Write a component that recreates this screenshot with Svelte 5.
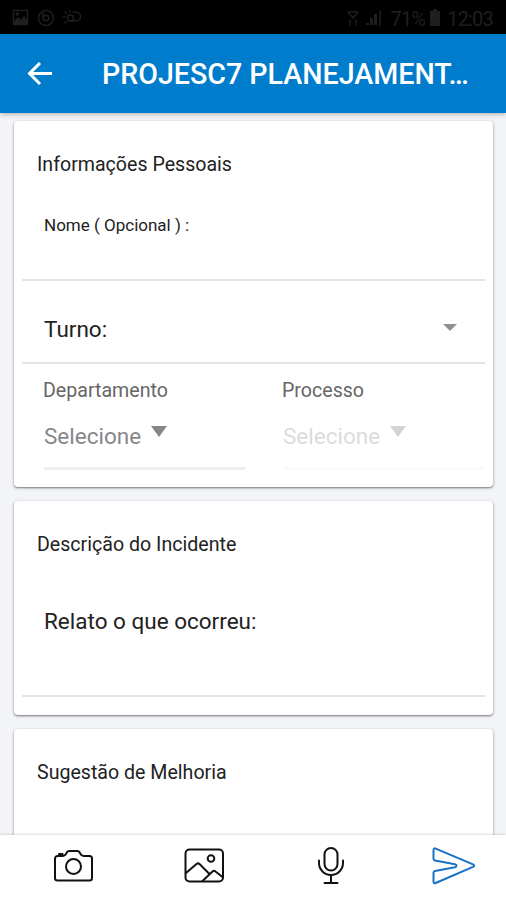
<script lang="ts">
  interface SelectField {
    label: string;
    value: string;
    disabled: boolean;
  }

  const title = 'PROJESC7 PLANEJAMENT…';

  const selects: SelectField[] = [
    { label: 'Departamento', value: 'Selecione', disabled: false },
    { label: 'Processo', value: 'Selecione', disabled: true }
  ];
</script>

<div class="screen">
  <div class="status-bar">
    <svg class="notifications" width="72" height="20" viewBox="0 0 72 20">
      <rect x="1.5" y="2.5" width="14" height="14" />
      <path d="M2 15l4-5 3 3 3-4 3 4v3H2z" fill="currentColor" />
      <circle cx="5.5" cy="6" r="1" />
      <circle cx="34" cy="10" r="7.5" />
      <circle cx="34" cy="10" r="2.8" />
      <path d="M31 5v5M51 9h2M53 4l1.5 1.5M53 15l1.5-1.5M58 3v1" />
      <circle cx="58.5" cy="10" r="3" />
      <path d="M61 4h3a4.5 4.5 0 0 1 0 9h-6" />
    </svg>
    <div class="status-right">
      <svg width="36" height="20" viewBox="0 0 36 20">
        <path d="M1 4h10L6 10zM3 17v-5M9 17v-5" />
        <path d="M19 17h3v-2h-3zM23 17h3v-7h-3zM27 17h3V6h-3z" fill="currentColor" stroke="none" />
        <path d="M33 17V3" />
      </svg>
      <span class="battery">71%</span>
      <svg width="13" height="20" viewBox="0 0 13 20">
        <path d="M1 3h3V1h4v2h3v15H1z" fill="currentColor" stroke="none" />
      </svg>
      <span class="clock">12:03</span>
    </div>
  </div>

  <header>
    <svg class="back" width="26" height="24" viewBox="0 0 26 24">
      <path d="M25 11.5H3M13 1L2.5 11.5 13 22" />
    </svg>
    <h1>{title}</h1>
  </header>

  <main>
    <section class="card personal">
      <h2>Informações Pessoais</h2>
      <div class="field name">
        <span>Nome ( Opcional ) :</span>
      </div>
      <div class="field shift">
        <span>Turno:</span>
        <i class="caret small"></i>
      </div>
      <div class="selects">
        {#each selects as select}
          <div class="select" class:disabled={select.disabled}>
            <span class="label">{select.label}</span>
            <div class="value">
              <span>{select.value}</span>
              <i class="caret"></i>
            </div>
          </div>
        {/each}
      </div>
    </section>

    <section class="card incident">
      <h2>Descrição do Incidente</h2>
      <div class="field report">
        <span>Relato o que ocorreu:</span>
      </div>
    </section>

    <section class="card suggestion">
      <h2>Sugestão de Melhoria</h2>
    </section>
  </main>

  <footer>
    <svg width="42" height="40" viewBox="0 0 42 40">
      <path d="M4.5 10H10c1.5 0 2.5-1 3.2-2.5.7-1.6 1.3-2.5 2.8-2.5h8.500c1.5 0 2.100.9 2.800 2.500.7 1.500 1.700 2.500 3.200 2.500h6a2.500 2.500 0 0 1 2.500 2.500v19.500a2.500 2.500 0 0 1-2.500 2.500h-32A2.500 2.500 0 0 1 2 32V12.500a2.500 2.500 0 0 1 2.500-2.500z" />
      <circle cx="20.5" cy="20.5" r="7.5" />
      <path d="M6 9.500V8h3.500v1.500z" fill="currentColor" />
    </svg>
    <svg width="42" height="40" viewBox="0 0 42 40">
      <rect x="2.5" y="3.5" width="37.5" height="32" rx="4" />
      <circle cx="28" cy="12.5" r="3.3" />
      <path d="M3 27l10.500-9c1-.8 2-.8 3 0L26 27.500M19.500 35l10-9.500c1-.9 2-.9 3 0l7 5.500" />
    </svg>
    <svg width="42" height="40" viewBox="0 0 42 40">
      <rect x="14.5" y="2" width="13" height="22.5" rx="6.5" />
      <path d="M9 14.500V17a12 12 0 0 0 24 0v-2.500M21 29v7.500M14.500 37h13" />
    </svg>
    <svg class="send" width="46" height="40" viewBox="0 0 46 40">
      <path d="M2.500 4.200c0-1.800 1-2.200 2.200-1.600L42 18.400c1.600.8 1.600 1.700 0 2.500L4.700 37c-1.200.6-2.200.1-2.200-1.600v-8.600c0-1 .5-1.500 1.500-1.700l20-3.900c2-.5 2-2.400 0-2.900l-20-3.900c-1-.2-1.500-.7-1.500-1.700z" />
    </svg>
  </footer>
</div>

<style>
  :global(body) {
    background: #f2f4f7;
  }

  .screen {
    display: flex;
    flex-direction: column;
    height: 900px;
    overflow: hidden;
    font-family: Roboto, 'Liberation Sans', sans-serif;
    color: #222;
  }

  svg {
    flex-shrink: 0;
    fill: none;
    stroke: currentColor;
    stroke-width: 2;
    stroke-linecap: round;
    stroke-linejoin: round;
  }

  .status-bar {
    display: flex;
    justify-content: space-between;
    flex: 0 0 34px;
    box-sizing: border-box;
    padding: 8px 13px 0 12px;
    background: #000;
    color: #1f1f1f;
    font-size: 20px;
    line-height: 22px;
  }

  .status-bar svg {
    stroke-width: 1.5;
  }

  .status-right {
    display: flex;
  }

  .battery {
    margin: 0 4px 0 7px;
    letter-spacing: -0.8px;
  }

  .clock {
    margin-left: 5px;
    letter-spacing: -0.8px;
  }

  header {
    display: flex;
    align-items: center;
    flex: 0 0 79px;
    box-sizing: border-box;
    padding: 0 27px;
    background: #007ccd;
    color: #fff;
    box-shadow: 0 1px 5px rgba(0, 0, 0, 0.3);
    z-index: 1;
  }

  .back {
    stroke-width: 3;
    stroke-linecap: butt;
    stroke-linejoin: miter;
  }

  h1 {
    margin: 0 0 0 49px;
    font-size: 28.6px;
    font-weight: 500;
    line-height: 40px;
    white-space: nowrap;
  }

  main {
    display: flex;
    flex-direction: column;
    gap: 14px;
    flex: 1;
    min-height: 0;
    padding: 8px 13px 0 14px;
    overflow: hidden;
    background: #f2f4f7;
  }

  .card {
    flex-shrink: 0;
    box-sizing: border-box;
    padding: 0 8px;
    background: #fff;
    border-radius: 4px;
    box-shadow: 0 1px 2px rgba(0, 0, 0, 0.45), 0 1px 4px rgba(0, 0, 0, 0.12);
  }

  .personal {
    height: 366px;
  }

  .incident {
    height: 214px;
  }

  .suggestion {
    height: 214px;
  }

  h2 {
    margin: 0;
    padding: 32px 15px 0;
    font-size: 19.6px;
    font-weight: 400;
    line-height: 24px;
  }

  .field {
    box-sizing: border-box;
    padding: 0 22px;
    border-bottom: 2px solid #e4e4e4;
    font-size: 22.5px;
    line-height: 26px;
  }

  .name {
    height: 104px;
    padding-top: 35px;
    font-size: 17px;
  }

  .shift {
    display: flex;
    justify-content: space-between;
    height: 83px;
    padding: 35px 28px 0 22px;
  }

  .report {
    height: 140px;
    padding-top: 51px;
  }

  .caret {
    width: 0;
    height: 0;
    border: 8.5px solid transparent;
    border-top: 11px solid #85878a;
    border-bottom: 0;
  }

  .caret.small {
    margin-top: 8px;
    border-width: 7px 7px 0;
    border-top-color: #909090;
  }

  .selects {
    display: grid;
    grid-template-columns: 202px 202px;
    gap: 37px;
    padding: 15px 0 0 22px;
  }

  .label {
    display: block;
    margin-left: -1px;
    color: #666;
    font-size: 19.6px;
    line-height: 24px;
  }

  .value {
    display: flex;
    gap: 10px;
    height: 67px;
    box-sizing: border-box;
    padding-top: 20px;
    border-bottom: 3px solid #eee;
    color: #85878a;
    font-size: 22.5px;
    line-height: 26px;
  }

  .value .caret {
    margin-top: 3px;
  }

  .disabled .value {
    border-color: #fafafa;
    color: #dcdcdc;
  }

  .disabled .caret {
    border-top-color: #d4d4d4;
  }

  footer {
    display: grid;
    grid-template-columns: 130px 127px 121px 46px;
    flex: 0 0 65px;
    box-sizing: border-box;
    padding: 11px 0 0 53px;
    background: #fff;
    box-shadow: 0 -1px 2px rgba(0, 0, 0, 0.13);
    color: #111;
    z-index: 1;
  }

  .send {
    color: #1872c8;
  }
</style>
